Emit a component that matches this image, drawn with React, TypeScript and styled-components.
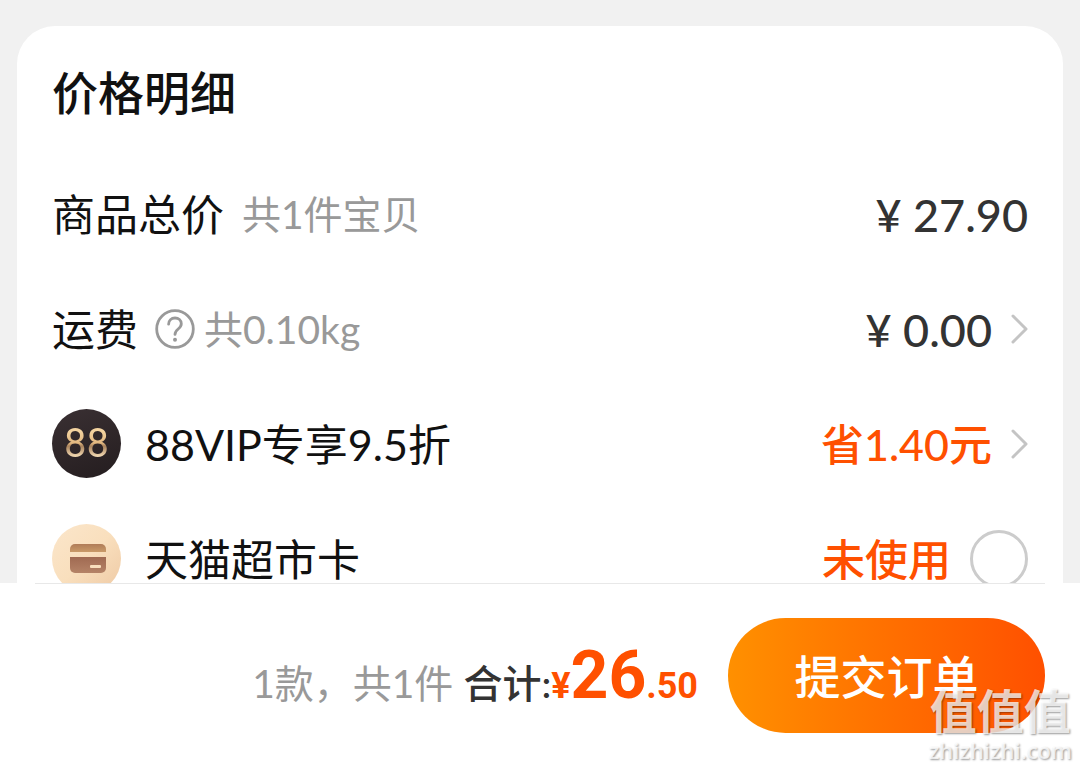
import React, { useState } from 'react';
import styled, { createGlobalStyle } from 'styled-components';

const GlobalStyle = createGlobalStyle`
  *, *::before, *::after { box-sizing: border-box; }
  body {
    margin: 0;
    background: #f1f1f1;
    color: #111;
    font-family: Lato, 'Noto Sans CJK SC', sans-serif;
  }
  button, input { font: inherit; }
`;

const Page = styled.div`
  display: flex;
  flex-direction: column;
  height: 100vh;
  overflow: hidden;
`;

const Content = styled.main`
  flex: 1;
  min-height: 0;
  overflow: hidden;
  padding: 26px 17px 0;
`;

const Card = styled.section`
  padding: 0 35px 36px;
  border-radius: 38px;
  background: #fff;
`;

const Title = styled.h1`
  display: flex;
  align-items: center;
  height: 130px;
  margin: 0;
  padding-top: 4px;
  font-size: 46px;
  font-weight: 500;
  line-height: 60px;
`;

const Row = styled.div`
  display: flex;
  align-items: center;
  justify-content: space-between;
  height: 115px;
  font-size: 43px;
  line-height: 60px;
  white-space: nowrap;
`;

const RowStart = styled.div<{ $gap: number }>`
  display: flex;
  align-items: center;
  gap: ${(p) => p.$gap}px;
`;

const RowEnd = styled.div`
  display: flex;
  align-items: center;
  gap: 19px;
`;

const Note = styled.span`
  color: #999;
  font-size: 39px;
`;

const HelpGroup = styled.span`
  display: flex;
  align-items: center;
  gap: 9px;
`;

const HelpButton = styled.button`
  display: flex;
  padding: 0;
  border: 0;
  background: none;
  color: #999;
  cursor: pointer;
`;

const Price = styled.span`
  padding-top: 2px;
  color: #333;
  font-size: 45px;
  font-weight: 500;
`;

const Label = styled.label`
  padding-top: 2px;
`;

const Text = styled.span`
  padding-top: 2px;
`;

const Highlight = styled.span`
  padding-top: 2px;
  color: #ff5000;
  font-weight: 500;
`;

const ArrowButton = styled.button`
  display: flex;
  padding: 0;
  border: 0;
  background: none;
  color: #c4c4c4;
  cursor: pointer;
`;

const VipBadge = styled.span`
  display: grid;
  place-items: center;
  width: 69px;
  height: 69px;
  border-radius: 50%;
  background: linear-gradient(160deg, #3a3033, #241d1f);
`;

const VipNumber = styled.span`
  background: linear-gradient(#f3d3a0 25%, #e3b880 48%, #a8825c 54%, #f7dfb8 75%);
  background-clip: text;
  -webkit-background-clip: text;
  color: transparent;
  font-family: Roboto, sans-serif;
  font-size: 40px;
  line-height: 52px;
`;

const Radio = styled.input`
  appearance: none;
  width: 58px;
  height: 58px;
  margin: 0;
  border: 3px solid #ccc;
  border-radius: 50%;
  background: #fff;
  cursor: pointer;

  &:checked {
    border: 16px solid #ff5000;
  }
`;

const Footer = styled.footer`
  background: #fff;
`;

const Divider = styled.hr`
  height: 1px;
  margin: 0 35px;
  border: 0;
  background: #e8e8e8;
`;

const FooterBar = styled.div`
  display: flex;
  align-items: center;
  justify-content: flex-end;
  gap: 30px;
  padding: 34px 35px 36px;
`;

const Summary = styled.div`
  display: flex;
  align-items: baseline;
  padding-top: 10px;
  font-size: 39px;
  line-height: 80px;
  white-space: nowrap;
`;

const Count = styled.span`
  margin-right: 10px;
  color: #999;
`;

const TotalLabel = styled.span`
  color: #333;
  font-weight: 500;
`;

const Total = styled.strong`
  color: #ff5000;
  font-family: Roboto, sans-serif;
  font-size: 36px;
  font-weight: 700;
`;

const TotalMajor = styled.span`
  font-size: 66px;
`;

const SubmitButton = styled.button`
  width: 317px;
  height: 115px;
  padding: 2px 0 0;
  border: 0;
  border-radius: 58px;
  background: linear-gradient(90deg, #ff9000, #ff5000);
  color: #fff;
  font-size: 46px;
  font-weight: 500;
  line-height: 60px;
  cursor: pointer;
`;

const Watermark = styled.div`
  position: absolute;
  right: 8px;
  bottom: 5px;
  display: flex;
  flex-direction: column;
  align-items: center;
  color: rgba(255, 255, 255, 0.75);
  text-shadow: 1px 1px 2px rgba(0, 0, 0, 0.4);
  pointer-events: none;
`;

const WatermarkName = styled.span`
  font-size: 47px;
  font-weight: 700;
  line-height: 50px;
`;

const WatermarkSite = styled.span`
  font-family: 'Open Sans', sans-serif;
  font-size: 22px;
  font-weight: 600;
  line-height: 28px;
`;

function Arrow({ label }: { label: string }) {
  return (
    <ArrowButton type="button" aria-label={label}>
      <svg width="17" height="30" viewBox="0 0 17 30" fill="none" stroke="currentColor" strokeWidth="3" strokeLinecap="round" strokeLinejoin="round">
        <path d="M2 2 15 15 2 28" />
      </svg>
    </ArrowButton>
  );
}

function HelpIcon() {
  return (
    <svg width="40" height="40" viewBox="0 0 40 40" fill="none" stroke="currentColor" strokeWidth="2.8" strokeLinecap="round">
      <circle cx="20" cy="20" r="18.3" />
      <path d="M13.6 15.2c0-3.8 2.8-6.2 6.4-6.2s6.3 2.4 6.3 5.8c0 5.4-6.3 5-6.3 10.6" />
      <circle cx="20" cy="30.8" r="2" fill="currentColor" stroke="none" />
    </svg>
  );
}

function CardIcon() {
  return (
    <svg width="69" height="69" viewBox="0 0 69 69">
      <defs>
        <linearGradient id="disc" x1="0" y1="0" x2="1" y2="1">
          <stop offset="0" stopColor="#fbe6cb" />
          <stop offset="0.5" stopColor="#f9dfbd" />
          <stop offset="1" stopColor="#eec9a4" />
        </linearGradient>
        <linearGradient id="strip" x1="0" y1="0" x2="0" y2="1">
          <stop offset="0" stopColor="#b07c58" />
          <stop offset="1" stopColor="#c99a68" />
        </linearGradient>
        <linearGradient id="face" x1="0" y1="0" x2="0" y2="1">
          <stop offset="0" stopColor="#a06a52" />
          <stop offset="1" stopColor="#b58367" />
        </linearGradient>
      </defs>
      <circle cx="34.5" cy="34.5" r="34.5" fill="url(#disc)" />
      <path d="M18 28v-3a5 5 0 0 1 5-5h26a5 5 0 0 1 5 5v3z" fill="url(#strip)" />
      <path d="M18 33h36v11a5 5 0 0 1-5 5H23a5 5 0 0 1-5-5z" fill="url(#face)" />
      <rect x="38" y="41" width="11" height="3" rx="1" fill="#f9dfbd" />
    </svg>
  );
}

export default function App() {
  const [useCard, setUseCard] = useState(false);

  return (
    <>
      <GlobalStyle />
      <Page>
        <Content>
          <Card>
            <Title>价格明细</Title>
            <Row>
              <RowStart $gap={18}>
                <Text>商品总价</Text>
                <Note>共1件宝贝</Note>
              </RowStart>
              <Price>¥ 27.90</Price>
            </Row>
            <Row>
              <RowStart $gap={17}>
                <Text>运费</Text>
                <HelpGroup>
                  <HelpButton type="button" aria-label="运费说明">
                    <HelpIcon />
                  </HelpButton>
                  <Note>共0.10kg</Note>
                </HelpGroup>
              </RowStart>
              <RowEnd>
                <Price>¥ 0.00</Price>
                <Arrow label="运费详情" />
              </RowEnd>
            </Row>
            <Row>
              <RowStart $gap={24}>
                <VipBadge>
                  <VipNumber>88</VipNumber>
                </VipBadge>
                <Text>88VIP专享9.5折</Text>
              </RowStart>
              <RowEnd>
                <Highlight>省1.40元</Highlight>
                <Arrow label="优惠详情" />
              </RowEnd>
            </Row>
            <Row>
              <RowStart $gap={24}>
                <CardIcon />
                <Label htmlFor="market-card">天猫超市卡</Label>
              </RowStart>
              <RowEnd>
                <Highlight>未使用</Highlight>
                <Radio
                  id="market-card"
                  type="radio"
                  checked={useCard}
                  onChange={() => setUseCard(true)}
                />
              </RowEnd>
            </Row>
          </Card>
        </Content>
        <Footer>
          <Divider />
          <FooterBar>
            <Summary>
              <Count>1款，共1件</Count>
              <TotalLabel>合计:</TotalLabel>
              <Total>
                ¥<TotalMajor>26</TotalMajor>.50
              </Total>
            </Summary>
            <SubmitButton type="button">提交订单</SubmitButton>
          </FooterBar>
        </Footer>
      </Page>
      <Watermark>
        <WatermarkName>值值值</WatermarkName>
        <WatermarkSite>zhizhizhi.com</WatermarkSite>
      </Watermark>
    </>
  );
}
